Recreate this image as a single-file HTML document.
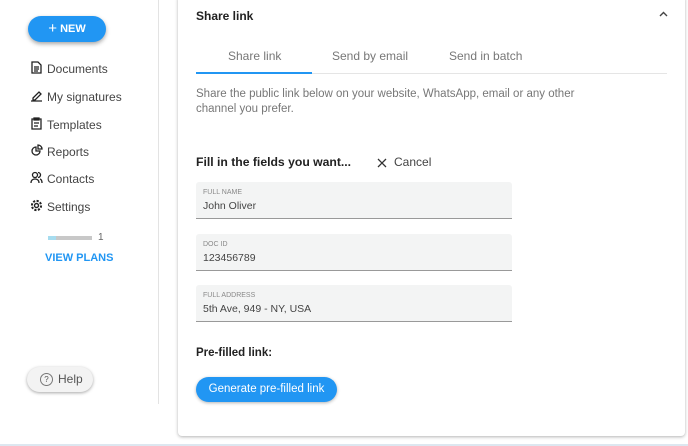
<!DOCTYPE html>
<html><head><style>
body{margin:0;width:688px;height:446px;background:#fff;font-family:"Liberation Sans",sans-serif;position:relative;overflow:hidden;color:#333}
.a{position:absolute}
.nav{left:30px;font-size:12px;color:#444}
.nav svg{position:absolute;left:0;top:0}
.nav span{position:absolute;left:17px;top:1px;white-space:nowrap}
.field{left:196px;width:316px;height:36px;background:#f3f4f4;border-bottom:1px solid #999;border-radius:3px 3px 0 0}
.field .l{position:absolute;left:7px;top:7px;font-size:7px;color:#888}
.field .v{position:absolute;left:7px;top:18px;font-size:10.5px;color:#444}
</style></head><body>
<div class="a" style="left:28px;top:16px;width:78px;height:26px;border-radius:13px;background:#2196f3;box-shadow:0 2px 4px rgba(0,0,0,.35);color:#fff;font-size:11px;font-weight:bold;text-align:center;line-height:26px"><span style="font-size:15px;font-weight:normal;vertical-align:-1px">+</span> NEW</div>
<div class="a nav" style="top:61px"><svg width="13" height="13" viewBox="0 0 13 13" fill="none" stroke="#222" stroke-width="1.3"><path d="M2 1h6l3 3v8H2z M4 6h5M4 8h5M4 10h4"/></svg><span>Documents</span></div>
<div class="a nav" style="top:89px"><svg width="13" height="13" viewBox="0 0 13 13" fill="none" stroke="#222" stroke-width="1.3"><path d="M1 12h11M3 9l6-6 2 2-6 6H3z"/></svg><span>My signatures</span></div>
<div class="a nav" style="top:117px"><svg width="13" height="13" viewBox="0 0 13 13" fill="none" stroke="#222" stroke-width="1.3"><path d="M2 2h9v10H2z M4 1h5v2H4z M4 6h5M4 9h4"/></svg><span>Templates</span></div>
<div class="a nav" style="top:144px"><svg width="13" height="13" viewBox="0 0 13 13" fill="none" stroke="#222" stroke-width="1.3"><path d="M6 3a4 4 0 1 0 4 4H6z M8 1v4h4a4 4 0 0 0-4-4z"/></svg><span>Reports</span></div>
<div class="a nav" style="top:171px"><svg width="13" height="13" viewBox="0 0 13 13" fill="none" stroke="#222" stroke-width="1.3"><circle cx="5" cy="4" r="2.5"/><path d="M1 12c0-3 2-4 4-4s4 1 4 4M8 1.5a2.5 2.5 0 0 1 0 5M10 8c1.5.5 2 2 2 4"/></svg><span>Contacts</span></div>
<div class="a nav" style="top:199px"><svg width="13" height="13" viewBox="0 0 13 13" fill="none" stroke="#222" stroke-width="1.4"><circle cx="6.5" cy="6.5" r="2"/><circle cx="6.5" cy="6.5" r="4.6" stroke-width="2" stroke-dasharray="2.2 1.4"/></svg><span>Settings</span></div>
<div class="a" style="left:48px;top:236px;width:44px;height:4px;background:#c8c8c8"><div style="width:8px;height:4px;background:#a6dcef"></div></div>
<div class="a" style="left:98px;top:232px;font-size:10px;color:#666">1</div>
<div class="a" style="left:45px;top:252px;font-size:11px;color:#2196f3;font-weight:bold">VIEW PLANS</div>
<div class="a" style="left:27px;top:367px;width:66px;height:25px;border-radius:13px;background:#f3f3f3;box-shadow:0 1px 3px rgba(0,0,0,.35);font-size:12px;color:#555;line-height:25px"><span style="position:absolute;left:13px;top:6px;width:11px;height:11px;border:1px solid #777;border-radius:50%;font-size:8px;line-height:11px;text-align:center">?</span><span style="position:absolute;left:31px">Help</span></div>
<div class="a" style="left:158px;top:0;width:1px;height:404px;background:#e3e3e3"></div>
<div class="a" style="left:178px;top:-5px;width:507px;height:441px;background:#fff;border-radius:4px;box-shadow:0 1px 3px rgba(0,0,0,.3)"></div>
<div class="a" style="left:196px;top:9px;font-size:12px;color:#222;font-weight:bold">Share link</div>
<svg class="a" style="left:659px;top:11px" width="9" height="6" viewBox="0 0 9 6" fill="none" stroke="#444" stroke-width="1.4"><path d="M1 5l3.5-3.5L8 5"/></svg>
<div class="a" style="left:228px;top:49px;font-size:12px;color:#777">Share link</div>
<div class="a" style="left:332px;top:49px;font-size:12px;color:#777">Send by email</div>
<div class="a" style="left:449px;top:49px;font-size:12px;color:#777">Send in batch</div>
<div class="a" style="left:196px;top:73px;width:471px;height:1px;background:#e5e5e5"></div>
<div class="a" style="left:196px;top:72px;width:116px;height:2px;background:#2196f3"></div>
<div class="a" style="left:196px;top:87px;width:410px;font-size:11.5px;color:#777;line-height:15px">Share the public link below on your website, WhatsApp, email or any other channel you prefer.</div>
<div class="a" style="left:196px;top:155px;font-size:12.2px;color:#222;font-weight:bold">Fill in the fields you want...</div>
<svg class="a" style="left:377px;top:158px" width="10" height="10" viewBox="0 0 10 10" stroke="#333" stroke-width="1.3"><path d="M1 1l8 8M9 1L1 9"/></svg>
<div class="a" style="left:394px;top:155px;font-size:12px;color:#444">Cancel</div>
<div class="a field" style="top:182px"><div class="l">FULL NAME</div><div class="v">John Oliver</div></div>
<div class="a field" style="top:234px"><div class="l">DOC ID</div><div class="v">123456789</div></div>
<div class="a field" style="top:285px"><div class="l">FULL ADDRESS</div><div class="v">5th Ave, 949 - NY, USA</div></div>
<div class="a" style="left:196px;top:347px;font-size:11.5px;color:#222;font-weight:bold">Pre-filled link:</div>
<div class="a" style="left:196px;top:377px;width:141px;height:25px;border-radius:13px;background:#2196f3;box-shadow:0 1px 3px rgba(0,0,0,.3);color:#fff;font-size:11.5px;line-height:25px;text-align:center">Generate pre-filled link</div>
<div class="a" style="left:0;top:444px;width:688px;height:2px;background:#dde7f0"></div>
</body></html>
